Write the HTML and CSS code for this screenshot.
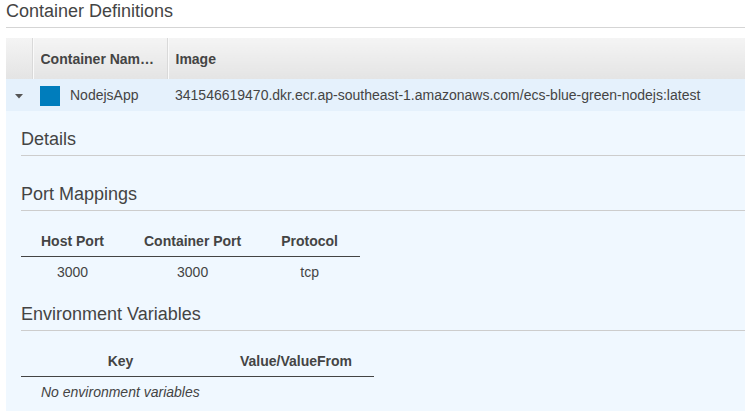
FILE: index.html
```html
<!DOCTYPE html>
<html>
<head>
<meta charset="utf-8">
<link rel="stylesheet" href="styles.css">
</head>
<body>
<div class="page">
  <h2 class="title">Container Definitions</h2>
  <table class="grid">
    <colgroup>
      <col class="c-exp">
      <col class="c-name">
      <col class="c-image">
    </colgroup>
    <thead>
      <tr>
        <th class="gh gh-exp"></th>
        <th class="gh gh-name" title="Container Name"><div class="ellip">Container Nam…</div></th>
        <th class="gh">Image</th>
      </tr>
    </thead>
    <tbody>
      <tr class="row">
        <td class="rc rc-exp">
          <svg class="caret" width="8" height="5" viewBox="0 0 8 5"><polygon points="0,0 8,0 4,4.5" fill="#555"/></svg>
        </td>
        <td class="rc"><div class="name"><span class="swatch"></span><span>NodejsApp</span></div></td>
        <td class="rc">341546619470.dkr.ecr.ap-southeast-1.amazonaws.com/ecs-blue-green-nodejs:latest</td>
      </tr>
      <tr class="detail-row">
        <td colspan="3" class="detail">
          <section class="sec">
            <h3 class="sec-title">Details</h3>
            <div class="sec-empty"></div>
          </section>
          <section class="sec">
            <h3 class="sec-title">Port Mappings</h3>
            <table class="sub">
              <thead>
                <tr><th class="sh">Host Port</th><th class="sh">Container Port</th><th class="sh">Protocol</th></tr>
              </thead>
              <tbody>
                <tr><td class="sd">3000</td><td class="sd">3000</td><td class="sd">tcp</td></tr>
              </tbody>
            </table>
          </section>
          <section class="sec sec-env">
            <h3 class="sec-title">Environment Variables</h3>
            <table class="sub">
              <thead>
                <tr><th class="sh key">Key</th><th class="sh">Value/ValueFrom</th></tr>
              </thead>
              <tbody>
                <tr><td colspan="2" class="sd empty">No environment variables</td></tr>
              </tbody>
            </table>
          </section>
        </td>
      </tr>
    </tbody>
  </table>
</div>
</body>
</html>
```
FILE: styles.css
```css
html, body {
  margin: 0;
  padding: 0;
  background: #fff;
  font-family: "Liberation Sans", Arial, sans-serif;
  color: #444;
  overflow: hidden;
}

.page {
  padding-left: 6px;
}

.title {
  margin: 0;
  font-size: 18px;
  font-weight: normal;
  line-height: 22px;
  padding-top: 0;
  padding-bottom: 5px;
  border-bottom: 1px solid #d5d5d5;
  color: #444;
}

.grid {
  margin-top: 10px;
  width: 100%;
  border-collapse: collapse;
  table-layout: fixed;
  font-size: 14px;
}

.c-exp { width: 26px; }
.c-name { width: 135px; }

.gh {
  height: 41px;
  padding: 0 8px;
  text-align: left;
  font-weight: bold;
  font-size: 14px;
  color: #444;
  background: linear-gradient(#f4f4f4, #e4e4e4);
  border-left: 1px solid #d9d9d9;
  box-shadow: inset 1px 0 0 #fafafa;
  white-space: nowrap;
  overflow: hidden;
}

.gh-exp {
  border-left: none;
  box-shadow: none;
  padding: 0;
}

.ellip {
  overflow: hidden;
  text-overflow: ellipsis;
  white-space: nowrap;
}

.rc {
  height: 32px;
  padding: 0 8px;
  background: #e5f1fc;
  white-space: nowrap;
  color: #444;
  font-size: 14px;
}

.rc-exp {
  padding: 0;
}

.caret {
  display: block;
  margin: 2px 0 0 9px;
}

.name {
  display: flex;
  align-items: center;
  gap: 10px;
}

.swatch {
  display: block;
  width: 20px;
  height: 20px;
  background: #007dbc;
  margin-top: 2px;
}

.detail {
  background: #f0f8ff;
  padding: 0 0 4px 15px;
}

.sec-title {
  margin: 17px 0 0;
  font-size: 18px;
  font-weight: normal;
  line-height: 22px;
  padding-bottom: 5px;
  border-bottom: 1px solid #cdcdcd;
  color: #444;
}

.sec-env .sec-title {
  margin-top: 16px;
}

.sec-empty {
  height: 10px;
}

.sub {
  margin-top: 15px;
  border-collapse: collapse;
  font-size: 14px;
}

.sh {
  padding: 7px 20px 7px 20px;
  line-height: 16px;
  font-weight: bold;
  text-align: center;
  color: #444;
  border-bottom: 1px solid #444;
  white-space: nowrap;
}

.sh:last-child {
  padding-right: 22px;
}

.sh.key {
  width: 159px;
}

.sd {
  padding: 7px 20px;
  line-height: 16px;
  text-align: center;
  color: #444;
}

.sd:last-child {
  padding-right: 22px;
}

.sd.empty {
  text-align: left;
  font-style: italic;
  padding-left: 20px;
}
```
